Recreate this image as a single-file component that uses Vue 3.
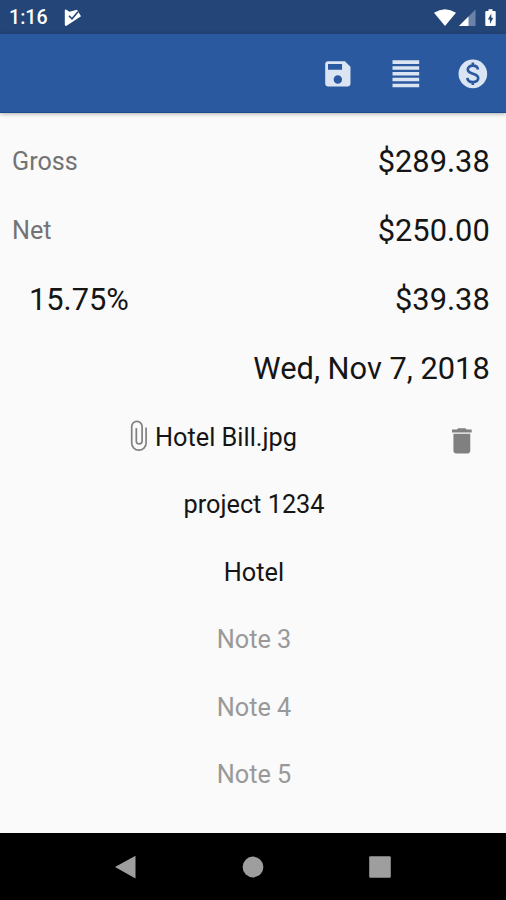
<script setup>
const amounts = [
  { label: 'Gross', value: '$289.38' },
  { label: 'Net', value: '$250.00' },
  { label: '15.75%', value: '$39.38', rate: true },
]
const notes = [
  { text: 'project 1234' },
  { text: 'Hotel' },
  { text: 'Note 3', empty: true },
  { text: 'Note 4', empty: true },
  { text: 'Note 5', empty: true },
]
</script>

<template>
  <div class="screen">
    <div class="status">
      <span class="clock">1:16</span>
      <svg class="check" viewBox="0 0 18 18">
        <path d="M.8 1.2Q1 .4 2 .6l3.5 2.2L13 .8 17 7.2 2.2 16.9Q.9 17 .8 15.8z" fill="#fff" />
        <path d="M5 6.8l3 3L14 2.8" fill="none" stroke="#234577" stroke-width="1.6" />
      </svg>
      <svg class="system" viewBox="0 0 66 20">
        <path d="M0 4.7Q11 -2.3 22 4.7L11 18z" fill="#fff" />
        <path d="M41.5 1.5V18H25z" fill="#6b83a8" />
        <path d="M34.5 8.5V18H25z" fill="#fff" />
        <path d="M54.5 1.2h4V3h2.2q1 0 1 1v13q0 1-1 1h-8.4q-1 0-1-1V4q0-1 1-1h2.2z" fill="#fff" />
        <path d="M57.3 5.5v4.2h2l-3.4 6.4v-4.6h-2z" fill="#234577" />
      </svg>
    </div>

    <header class="toolbar">
      <svg class="action" viewBox="0 0 24 24">
        <path d="M17 3H5c-1.11 0-2 .9-2 2v14c0 1.1.89 2 2 2h14c1.1 0 2-.9 2-2V7l-4-4zm-5 16c-1.66 0-3-1.34-3-3s1.34-3 3-3 3 1.34 3 3-1.34 3-3 3zm3-10H5V5h10v4z" />
      </svg>
      <svg class="action" viewBox="0 0 24 24">
        <path d="M2.5 2.4h19v2.5h-19zM2.5 6.55h19v2.5h-19zM2.5 10.7h19v2.5h-19zM2.5 14.85h19v2.5h-19zM2.5 19h19v2.5h-19z" />
      </svg>
      <svg class="action" viewBox="0 0 24 24">
        <circle cx="12" cy="12" r="10.2" />
        <path class="dollar" d="M15.6 8.9C15.5 7.2 14.2 6.1 12 6.1S8.4 7.3 8.4 8.9c0 3.9 7.4 2.1 7.4 6.1 0 1.8-1.6 2.9-3.8 2.9s-3.8-1.1-3.9-3M12 4v2.2M12 17.8V20" />
      </svg>
    </header>

    <main class="content">
      <div v-for="a in amounts" :key="a.label" class="amount">
        <span :class="a.rate ? 'rate' : 'label'">{{ a.label }}</span>
        <span class="value">{{ a.value }}</span>
      </div>
      <div class="amount date"><span class="value">Wed, Nov 7, 2018</span></div>

      <div class="file">
        <svg class="clip" viewBox="0 0 18 32">
          <path d="M16.1 7.5V23a7.2 7.2 0 0 1-14.4 0V6.5a5.2 5.2 0 0 1 10.4 0V21a2.9 2.9 0 0 1-5.8 0V8" />
        </svg>
        <span class="filename">Hotel Bill.jpg</span>
        <svg class="trash" viewBox="0 0 24 24">
          <path d="M6 19c0 1.1.9 2 2 2h8c1.1 0 2-.9 2-2V7H6v12zM19 4h-3.5l-1-1h-5l-1 1H5v2h14V4z" />
        </svg>
      </div>

      <div v-for="n in notes" :key="n.text" class="note" :class="{ empty: n.empty }">{{ n.text }}</div>
    </main>

    <nav class="navbar">
      <svg viewBox="0 0 24 24"><path d="M21.5 .8v22.6L1 12.1z" /></svg>
      <svg viewBox="0 0 24 24"><circle cx="12" cy="12" r="10.4" /></svg>
      <svg viewBox="0 0 24 24"><rect x="1.2" y="1.2" width="21.6" height="21.6" rx="1.2" /></svg>
    </nav>
  </div>
</template>

<style>
body {
  margin: 0;
}
</style>

<style scoped>
.screen {
  display: flex;
  flex-direction: column;
  width: 506px;
  height: 900px;
  overflow: hidden;
  background: #fafafa;
  color: #151515;
  font-family: Roboto, "Liberation Sans", sans-serif;
}
.status {
  display: flex;
  align-items: center;
  height: 34px;
  padding: 0 6px 0 9px;
  box-sizing: border-box;
  background: #234577;
}
.clock {
  color: #fff;
  font-size: 19.6px;
  font-weight: 500;
  line-height: 34px;
  padding-top: 2px;
}
.check {
  width: 18px;
  height: 18px;
  margin: 1px 0 0 16px;
}
.system {
  width: 66px;
  height: 20px;
  margin: 1px 0 0 auto;
}
.toolbar {
  position: relative;
  display: flex;
  flex: none;
  justify-content: flex-end;
  align-items: center;
  gap: 33.8px;
  height: 79px;
  padding: 1px 16px 0 0;
  box-sizing: border-box;
  background: #2b599f;
  border-bottom: 1px solid #1c4a90;
  box-shadow: 0 1px 4px rgba(0, 0, 0, 0.3);
}
.action {
  width: 33.7px;
  height: 33.7px;
  fill: #dbe4f2;
}
.dollar {
  fill: none;
  stroke: #2b599f;
  stroke-width: 1.9;
}
.content {
  flex: 1;
  padding-top: 13.4px;
}
.amount {
  display: flex;
  justify-content: space-between;
  align-items: center;
  height: 69.3px;
  padding: 0 16.3px 0 12px;
}
.amount.date {
  justify-content: flex-end;
}
.label {
  padding-top: 1px;
  color: #737373;
  font-size: 25.2px;
}
.rate {
  padding-left: 17px;
  font-size: 30.8px;
}
.value {
  font-size: 30.8px;
}
.file {
  display: grid;
  grid-template-columns: 130px auto 1fr auto;
  align-items: center;
  height: 67.5px;
  padding-right: 27px;
}
.clip {
  grid-column: 2;
  width: 18px;
  height: 32px;
  margin-top: -2px;
  fill: none;
  stroke: #808080;
  stroke-width: 1.7;
}
.filename {
  padding-left: 7px;
  font-size: 25.3px;
}
.trash {
  width: 33.7px;
  height: 33.7px;
  margin-top: 8px;
  fill: #808080;
}
.note {
  height: 67.5px;
  padding-left: 2px;
  font-size: 25.3px;
  line-height: 67.5px;
  text-align: center;
}
.note.empty {
  color: #999;
}
.navbar {
  display: flex;
  flex: none;
  justify-content: space-between;
  align-items: center;
  height: 67px;
  padding: 0 114px;
  box-sizing: border-box;
  background: #000;
}
.navbar svg {
  width: 24px;
  height: 24px;
  fill: #9e9e9e;
}
</style>
